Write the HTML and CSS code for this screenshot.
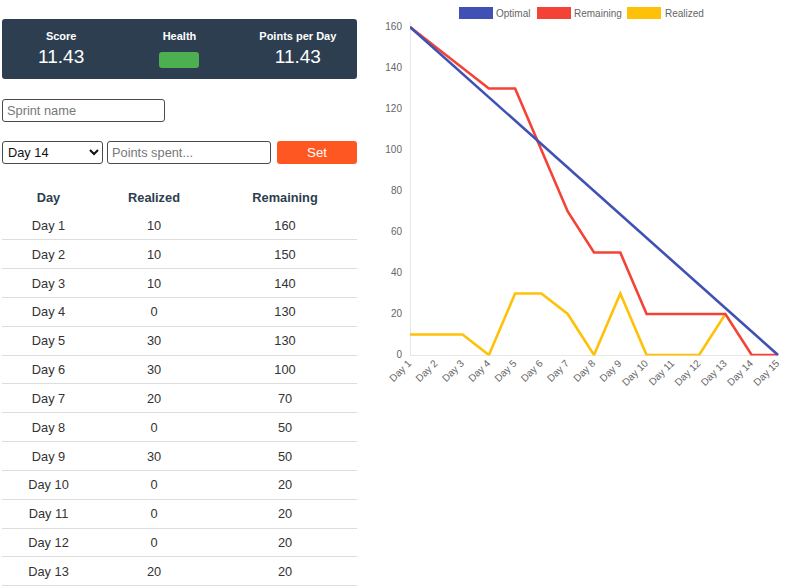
FILE: index.html
```html
<!DOCTYPE html>
<html>
<head>
<meta charset="utf-8">
<link rel="stylesheet" href="styles.css">
</head>
<body>
<div class="page">
  <div class="left">
    <div class="stats">
      <div class="stat"><div class="stat-label">Score</div><div class="stat-value">11.43</div></div>
      <div class="stat"><div class="stat-label">Health</div><div class="health"></div></div>
      <div class="stat"><div class="stat-label">Points per Day</div><div class="stat-value">11.43</div></div>
    </div>
    <input class="sprint" type="text" placeholder="Sprint name">
    <div class="controls">
      <select class="day-select">
        <option>Day 14</option>
      </select>
      <input class="points" type="text" placeholder="Points spent...">
      <button class="set">Set</button>
    </div>
    <table class="days">
      <thead>
        <tr><th class="c1">Day</th><th class="c2">Realized</th><th class="c3">Remaining</th></tr>
      </thead>
      <tbody>
        <tr><td>Day 1</td><td>10</td><td>160</td></tr>
        <tr><td>Day 2</td><td>10</td><td>150</td></tr>
        <tr><td>Day 3</td><td>10</td><td>140</td></tr>
        <tr><td>Day 4</td><td>0</td><td>130</td></tr>
        <tr><td>Day 5</td><td>30</td><td>130</td></tr>
        <tr><td>Day 6</td><td>30</td><td>100</td></tr>
        <tr><td>Day 7</td><td>20</td><td>70</td></tr>
        <tr><td>Day 8</td><td>0</td><td>50</td></tr>
        <tr><td>Day 9</td><td>30</td><td>50</td></tr>
        <tr><td>Day 10</td><td>0</td><td>20</td></tr>
        <tr><td>Day 11</td><td>0</td><td>20</td></tr>
        <tr><td>Day 12</td><td>0</td><td>20</td></tr>
        <tr><td>Day 13</td><td>20</td><td>20</td></tr>
      </tbody>
    </table>
  </div>
  <div class="chart">
    <svg width="429" height="400" viewBox="0 0 429 400" xmlns="http://www.w3.org/2000/svg">
      <defs>
        <clipPath id="area"><rect x="40" y="0" width="380" height="355.5"/></clipPath>
      </defs>
      <!-- legend -->
      <rect x="89.5" y="7.5" width="33" height="11" fill="#3f51b5" stroke="#3f51b5"/>
      <text class="lg" x="126" y="16.5">Optimal</text>
      <rect x="167.5" y="7.5" width="33" height="11" fill="#f44336" stroke="#f44336"/>
      <text class="lg" x="204" y="16.5">Remaining</text>
      <rect x="257.5" y="7.5" width="33" height="11" fill="#ffc107" stroke="#ffc107"/>
      <text class="lg" x="295" y="16.5">Realized</text>
      <!-- axes -->
      <line x1="40.5" y1="22" x2="40.5" y2="355" stroke="#e6e6e6" stroke-width="1"/>
      <line x1="40" y1="355.5" x2="409" y2="355.5" stroke="#e6e6e6" stroke-width="1"/>
      <!-- y labels -->
      <g class="yl">
        <text x="32" y="27">160</text>
        <text x="32" y="68">140</text>
        <text x="32" y="109">120</text>
        <text x="32" y="150">100</text>
        <text x="32" y="191">80</text>
        <text x="32" y="232">60</text>
        <text x="32" y="273">40</text>
        <text x="32" y="314">20</text>
        <text x="32" y="355">0</text>
      </g>
      <!-- x labels -->
      <g class="xl">
        <text transform="translate(42,364) rotate(-45)">Day 1</text>
        <text transform="translate(68.3,364) rotate(-45)">Day 2</text>
        <text transform="translate(94.6,364) rotate(-45)">Day 3</text>
        <text transform="translate(120.9,364) rotate(-45)">Day 4</text>
        <text transform="translate(147.1,364) rotate(-45)">Day 5</text>
        <text transform="translate(173.4,364) rotate(-45)">Day 6</text>
        <text transform="translate(199.7,364) rotate(-45)">Day 7</text>
        <text transform="translate(226,364) rotate(-45)">Day 8</text>
        <text transform="translate(252.3,364) rotate(-45)">Day 9</text>
        <text transform="translate(278.6,364) rotate(-45)">Day 10</text>
        <text transform="translate(304.9,364) rotate(-45)">Day 11</text>
        <text transform="translate(331.1,364) rotate(-45)">Day 12</text>
        <text transform="translate(357.4,364) rotate(-45)">Day 13</text>
        <text transform="translate(383.7,364) rotate(-45)">Day 14</text>
        <text transform="translate(410,364) rotate(-45)">Day 15</text>
      </g>
      <g clip-path="url(#area)" fill="none" stroke-width="2.6" stroke-linejoin="miter">
        <polyline stroke="#ffc107" points="40,334.5 66.3,334.5 92.6,334.5 118.9,355 145.1,293.5 171.4,293.5 197.7,314 224,355 250.3,293.5 276.6,355 302.9,355 329.1,355 355.4,314"/>
        <polyline stroke="#f44336" points="40,27 66.3,47.5 92.6,68 118.9,88.5 145.1,88.5 171.4,150 197.7,211.5 224,252.5 250.3,252.5 276.6,314 302.9,314 329.1,314 355.4,314 381.7,355 408,355"/>
        <polyline stroke="#3f51b5" points="40,27 408,355"/>
      </g>
    </svg>
  </div>
</div>
</body>
</html>
```
FILE: styles.css
```css
* { box-sizing: border-box; }
body {
  margin: 0;
  font-family: "Liberation Sans", Arial, sans-serif;
  color: #333;
  background: #fff;
}
.page {
  display: flex;
  align-items: flex-start;
  padding-left: 2px;
}
.left {
  width: 355px;
  padding-top: 19px;
}
.stats {
  display: grid;
  grid-template-columns: 1fr 1fr 1fr;
  background: #2c3e50;
  border-radius: 3px;
  height: 60px;
  padding-top: 11px;
  color: #fff;
}
.stat {
  display: flex;
  flex-direction: column;
  align-items: center;
}
.stat-label {
  font-size: 11px;
  font-weight: bold;
  line-height: 13px;
}
.stat-value {
  font-size: 19px;
  line-height: 23px;
  margin-top: 2px;
}
.health {
  width: 40px;
  height: 16px;
  margin-top: 9px;
  background: #4caf50;
  border-radius: 3px;
}
input, select, button {
  font-family: "Liberation Sans", Arial, sans-serif;
  font-size: 12.8px;
  height: 23px;
  border: 1px solid #4a4a4a;
  border-radius: 3px;
  background: #fff;
  color: #111;
}
input { padding: 0 4px; }
input::placeholder { color: #777; }
.sprint {
  display: block;
  width: 163px;
  margin-top: 20px;
}
.controls {
  display: flex;
  margin-top: 19px;
}
.day-select {
  width: 101px;
  padding: 0 1px;
}
.points {
  width: 164px;
  margin-left: 4px;
}
.set {
  width: 80px;
  margin-left: 6px;
  border: none;
  background: #ff5722;
  color: #fff;
  font-size: 13.3px;
}
.days {
  width: 355px;
  margin-top: 20px;
  border-collapse: collapse;
  font-size: 12.8px;
  color: #333;
}
.days th {
  height: 27px;
  font-weight: bold;
  color: #2c3e50;
  text-align: center;
  padding: 0;
}
.days .c1 { width: 93px; }
.days .c2 { width: 118px; }
.days .c3 { width: 144px; }
.days td {
  height: 28.83px;
  text-align: center;
  padding: 0;
  border-bottom: 1px solid #ddd;
}
.chart {
  margin-left: 13px;
  width: 429px;
}
.chart svg { display: block; }
.lg {
  font-family: "Liberation Sans", Arial, sans-serif;
  font-size: 10px;
  fill: #666;
}
.yl text {
  font-family: "Liberation Sans", Arial, sans-serif;
  font-size: 10px;
  fill: #666;
  text-anchor: end;
  dominant-baseline: middle;
}
.xl text {
  font-family: "Liberation Sans", Arial, sans-serif;
  font-size: 10px;
  fill: #666;
  text-anchor: end;
}
```
